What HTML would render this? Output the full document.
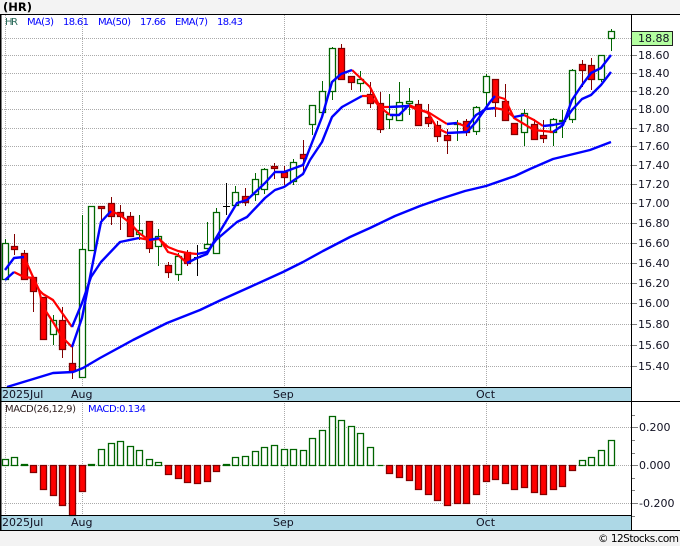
<!DOCTYPE html>
<html><head><meta charset="utf-8"><style>
html,body{margin:0;padding:0;background:#f3f3f3}
svg{position:absolute;left:0;top:0;display:block}
text{font-family:"DejaVu Sans",sans-serif;font-size:11px;fill:#112}
</style></head><body>
<svg width="680" height="546" viewBox="0 0 680 546" xmlns="http://www.w3.org/2000/svg">
<rect x="0" y="15" width="680" height="515" fill="#fff"/>
<rect x="1" y="388" width="630" height="14" fill="#add8e6"/>
<rect x="1" y="516" width="630" height="14" fill="#add8e6"/>
<!-- grid -->
<path fill="none" stroke="#aaa" stroke-dasharray="1 1" shape-rendering="crispEdges" d="M2 38.5H631M2 55.5H631M2 73.5H631M2 91.5H631M2 109.5H631M2 128.5H631M2 146.5H631M2 165.5H631M2 184.5H631M2 203.5H631M2 223.5H631M2 243.5H631M2 263.5H631M2 283.5H631M2 303.5H631M2 324.5H631M2 345.5H631M2 366.5H631M2 427.5H631M2 465.5H631M2 503.5H631M5.5 15V387M82.5 15V387M284.5 15V387M486.5 15V387M5.5 403V515M82.5 403V515M284.5 403V515M486.5 403V515"/>
<!-- ticks -->
<path fill="none" stroke="#808080" shape-rendering="crispEdges" d="M632 55.5h5M632 73.5h5M632 91.5h5M632 109.5h5M632 128.5h5M632 146.5h5M632 165.5h5M632 184.5h5M632 203.5h5M632 223.5h5M632 243.5h5M632 263.5h5M632 283.5h5M632 303.5h5M632 324.5h5M632 345.5h5M632 366.5h5M632 427.5h6M632 465.5h6M632 503.5h6M632 415.5h3M632 440.5h3M632 453.5h3M632 478.5h3M632 490.5h3M632 516.5h3"/>
<!-- green wicks -->
<path fill="none" stroke="#006400" shape-rendering="crispEdges" d="M5.5 239V280M53.5 315V345M82.5 215V377M139.5 215V240M158.5 229V266M178.5 253V281M207.5 222V248M216.5 208V253M235.5 186V207M255.5 173V201M264.5 168V194M293.5 159V185M312.5 105V135M322.5 81V112M332.5 47V100M360.5 71V92M389.5 94V129M399.5 82V120M409.5 88V115M457.5 120V141M476.5 106V135M486.5 74V107M524.5 109V146M553.5 118V146M562.5 110V138M572.5 69V123M601.5 55V82M611.5 29V51"/>
<!-- red wicks -->
<path fill="none" stroke="#800000" shape-rendering="crispEdges" d="M14.5 234V255M24.5 250V279M33.5 277V312M43.5 297V339M62.5 307V358M72.5 347V379M101.5 206V222M111.5 197V225M120.5 205V230M130.5 212V236M149.5 221V253M168.5 262V278M187.5 250V266M245.5 188V206M274.5 163V179M284.5 166V185M303.5 140V173M341.5 44V79M351.5 76V90M370.5 82V108M380.5 92V133M418.5 100V125M428.5 104V127M437.5 121V142M447.5 129V154M466.5 119V136M495.5 79V117M505.5 84V121M514.5 123V135M534.5 119V139M543.5 120V143M582.5 60V87M591.5 58V90"/>
<!-- doji -->
<path fill="none" stroke="#000" shape-rendering="crispEdges" d="M197.5 245V276M194 257.5h7M226.5 183V215M223 206.5h7"/>
<!-- green bodies -->
<path fill="#fff" stroke="#006400" stroke-width="1.3" d="M2.5 243.5h6v36h-6zM50.5 320.5h6v14h-6zM79.5 249.5h6v128h-6zM88.5 206.5h6v44h-6zM136.5 230.5h6v4h-6zM155.5 236.5h6v10h-6zM175.5 256.5h6v18h-6zM204.5 244.5h6v4h-6zM213.5 212.5h6v41h-6zM232.5 192.5h6v13h-6zM252.5 179.5h6v15h-6zM261.5 169.5h6v20h-6zM290.5 162.5h6v19h-6zM309.5 105.5h6v19h-6zM319.5 91.5h6v21h-6zM329.5 48.5h6v43h-6zM357.5 79.5h6v4h-6zM386.5 114.5h6v5h-6zM396.5 102.5h6v18h-6zM406.5 101.5h6v2h-6zM454.5 123.5h6v1h-6zM473.5 107.5h6v24h-6zM483.5 76.5h6v16h-6zM521.5 113.5h6v19h-6zM550.5 119.5h6v13h-6zM559.5 120.5h6v1h-6zM569.5 70.5h6v49h-6zM598.5 55.5h6v24h-6zM608.5 31.5h6v7h-6z"/>
<!-- red bodies -->
<path fill="#f00" stroke="#800000" stroke-width="1.3" d="M11.5 246.5h6v3h-6zM21.5 253.5h6v26h-6zM30.5 277.5h6v14h-6zM40.5 297.5h6v42h-6zM59.5 320.5h6v29h-6zM69.5 363.5h6v8h-6zM98.5 206.5h6v2h-6zM108.5 203.5h6v13h-6zM117.5 212.5h6v4h-6zM127.5 216.5h6v20h-6zM146.5 221.5h6v27h-6zM165.5 265.5h6v7h-6zM184.5 252.5h6v11h-6zM242.5 196.5h6v6h-6zM271.5 166.5h6v2h-6zM281.5 172.5h6v5h-6zM300.5 154.5h6v4h-6zM338.5 48.5h6v31h-6zM348.5 76.5h6v6h-6zM367.5 94.5h6v9h-6zM377.5 103.5h6v26h-6zM415.5 104.5h6v21h-6zM425.5 117.5h6v6h-6zM434.5 125.5h6v11h-6zM444.5 135.5h6v5h-6zM463.5 121.5h6v11h-6zM492.5 79.5h6v23h-6zM502.5 101.5h6v19h-6zM511.5 123.5h6v11h-6zM531.5 124.5h6v15h-6zM540.5 135.5h6v3h-6zM579.5 64.5h6v6h-6zM588.5 65.5h6v14h-6z"/>
<!-- red lines -->
<g fill="none" stroke="#f00" stroke-width="2.2" stroke-linejoin="round">
<polyline points="24,257 33,277 39,290 43,294 53,300 72,327"/>
<polyline points="139,238 150,240 159,239 168,247 178,251 187,253 197,254"/>
<polyline points="362,96 370,96 380,107 389,107"/>
<polyline points="409,106 418,110 428,112 447,124"/>
<polyline points="457,123 467,127"/>
<polyline points="495,108 505,110 514,117"/>
<polyline points="524,115 534,120 543,126"/>
<polyline points="14,272 24,277 33,278 39,290 43,307 53,322 62,337 72,347"/>
<polyline points="111,211 120,215 130,223 139,233 149,240"/>
<polyline points="159,238 168,252 178,255 187,263"/>
<polyline points="352,70 370,87 380,107 390,115"/>
<polyline points="409,105 428,113 437,128 447,133"/>
<polyline points="495,96 505,99 514,118 534,130 553,132"/>
</g>
<!-- blue lines -->
<g fill="none" stroke="#00f" stroke-width="2.4" stroke-linejoin="round">
<polyline points="5,270 14,258 24,257"/>
<polyline points="72,327 82,303 91,277 101,262 120,242 139,238"/>
<polyline points="197,254 207,252 216,240 237,222 247,217 265,198 275,190 284,187 303,174 310,160 322,142 332,117 342,107 362,96"/>
<polyline points="389,107 409,106"/>
<polyline points="447,124 457,123"/>
<polyline points="467,127 476,115 486,109 495,108"/>
<polyline points="514,117 524,115"/>
<polyline points="543,126 553,125 563,123 572,110 582,99 591,95 601,85 611,72"/>
<polyline points="5,280 14,272"/>
<polyline points="72,347 82,318 91,272 101,222 111,211"/>
<polyline points="149,240 159,238"/>
<polyline points="187,263 197,258 207,254 216,238 237,203 247,200 265,183 275,172 284,172 303,165 306,158 322,117 332,82 341,74 352,70"/>
<polyline points="390,115 399,115 409,105"/>
<polyline points="447,133 467,132 476,122 490,102 495,96"/>
<polyline points="553,132 563,125 572,100 582,85 591,73 601,68 611,55"/>
<polyline points="7,387 30,380 53,373 73,372 83,368 100,358 133,340 167,323 200,310 221,300 250,287 283,272 303,262 323,251 350,237 370,228 395,216 420,206 440,199 465,191 486,186 515,176 530,169 553,159 590,150 611,142"/>
</g>
<!-- MACD green -->
<path fill="#fff" stroke="#006400" stroke-width="1.3" d="M2.5 459.5h6v6h-6zM11.5 457.5h6v8h-6zM21.5 464.5h6v1h-6zM88.5 464.5h6v1h-6zM98.5 449.5h6v16h-6zM108.5 443.5h6v22h-6zM117.5 441.5h6v24h-6zM127.5 446.5h6v19h-6zM136.5 450.5h6v15h-6zM146.5 459.5h6v6h-6zM155.5 462.5h6v3h-6zM223.5 464.5h6v1h-6zM232.5 457.5h6v8h-6zM242.5 456.5h6v9h-6zM252.5 451.5h6v14h-6zM261.5 447.5h6v18h-6zM271.5 445.5h6v20h-6zM281.5 449.5h6v16h-6zM290.5 449.5h6v16h-6zM300.5 450.5h6v15h-6zM309.5 438.5h6v27h-6zM319.5 430.5h6v35h-6zM329.5 416.5h6v49h-6zM338.5 420.5h6v45h-6zM348.5 426.5h6v39h-6zM357.5 433.5h6v32h-6zM367.5 447.5h6v18h-6zM377.5 465.5h6zM598.5 450.5h6v15h-6zM579.5 460.5h6v5h-6zM588.5 457.5h6v8h-6zM608.5 440.5h6v25h-6z"/>
<!-- MACD red -->
<path fill="#f00" stroke="#800000" stroke-width="1.3" d="M30.5 465.5h6v7h-6zM40.5 465.5h6v24h-6zM50.5 465.5h6v30h-6zM59.5 465.5h6v40h-6zM69.5 465.5h6v50h-6zM79.5 465.5h6v26h-6zM165.5 465.5h6v9h-6zM175.5 465.5h6v13h-6zM184.5 465.5h6v17h-6zM194.5 465.5h6v18h-6zM204.5 465.5h6v16h-6zM213.5 465.5h6v6h-6zM386.5 465.5h6v8h-6zM396.5 465.5h6v12h-6zM406.5 465.5h6v15h-6zM415.5 465.5h6v24h-6zM425.5 465.5h6v29h-6zM434.5 465.5h6v35h-6zM444.5 465.5h6v40h-6zM454.5 465.5h6v38h-6zM463.5 465.5h6v38h-6zM473.5 465.5h6v29h-6zM483.5 465.5h6v16h-6zM492.5 465.5h6v14h-6zM502.5 465.5h6v18h-6zM511.5 465.5h6v24h-6zM521.5 465.5h6v22h-6zM531.5 465.5h6v27h-6zM540.5 465.5h6v29h-6zM550.5 465.5h6v24h-6zM559.5 465.5h6v21h-6zM569.5 465.5h6v5h-6z"/>
<!-- frame -->
<g fill="#000" shape-rendering="crispEdges">
<rect x="0" y="14" width="680" height="1"/>
<rect x="0" y="14" width="1.5" height="516"/>
<rect x="631" y="14" width="1" height="516"/>
<rect x="0" y="387" width="632" height="1"/>
<rect x="0" y="401" width="680" height="1"/>
<rect x="0" y="515" width="632" height="1"/>
<rect x="0" y="530" width="680" height="1"/>
</g>
<!-- price tag -->
<rect x="631.5" y="31.5" width="41" height="14" fill="#b4ffa0" stroke="#222" shape-rendering="crispEdges"/>
<!-- text -->
<text x="3" y="11" style="font-size:11.5px;font-weight:bold;fill:#000">(HR)</text>
<text x="5" y="25" style="font-size:10px;fill:#2a6a5a" textLength="13">HR</text>
<text x="27" y="25" style="font-size:10px;fill:#00f" textLength="27">MA(3)</text>
<text x="63" y="25" style="font-size:10px;fill:#00f" textLength="26">18.61</text>
<text x="98" y="25" style="font-size:10px;fill:#00f" textLength="33">MA(50)</text>
<text x="140" y="25" style="font-size:10px;fill:#00f" textLength="26">17.66</text>
<text x="175" y="25" style="font-size:10px;fill:#00f" textLength="33">EMA(7)</text>
<text x="217" y="25" style="font-size:10px;fill:#00f" textLength="26">18.43</text>
<text x="5" y="412" style="font-size:10px;fill:#322" textLength="71">MACD(26,12,9)</text>
<text x="88" y="412" style="font-size:10px;fill:#00f" textLength="58">MACD:0.134</text>
<text x="2" y="398">2025Jul</text>
<text x="71" y="398">Aug</text>
<text x="273" y="398">Sep</text>
<text x="476" y="398">Oct</text>
<text x="2" y="526">2025Jul</text>
<text x="71" y="526">Aug</text>
<text x="273" y="526">Sep</text>
<text x="476" y="526">Oct</text>
<text x="638" y="42">18.88</text>
<text x="638" y="59">18.60</text>
<text x="638" y="77">18.40</text>
<text x="638" y="95">18.20</text>
<text x="638" y="113">18.00</text>
<text x="638" y="132">17.80</text>
<text x="638" y="150">17.60</text>
<text x="638" y="169">17.40</text>
<text x="638" y="188">17.20</text>
<text x="638" y="207">17.00</text>
<text x="638" y="227">16.80</text>
<text x="638" y="247">16.60</text>
<text x="638" y="267">16.40</text>
<text x="638" y="287">16.20</text>
<text x="638" y="307">16.00</text>
<text x="638" y="328">15.80</text>
<text x="638" y="349">15.60</text>
<text x="638" y="370">15.40</text>
<text x="639" y="431">0.200</text>
<text x="639" y="469">0.000</text>
<text x="639" y="507">-0.200</text>
<text x="598" y="542" style="font-size:10.5px;fill:#000" textLength="81">© 12Stocks.com</text>
</svg>
</body></html>
